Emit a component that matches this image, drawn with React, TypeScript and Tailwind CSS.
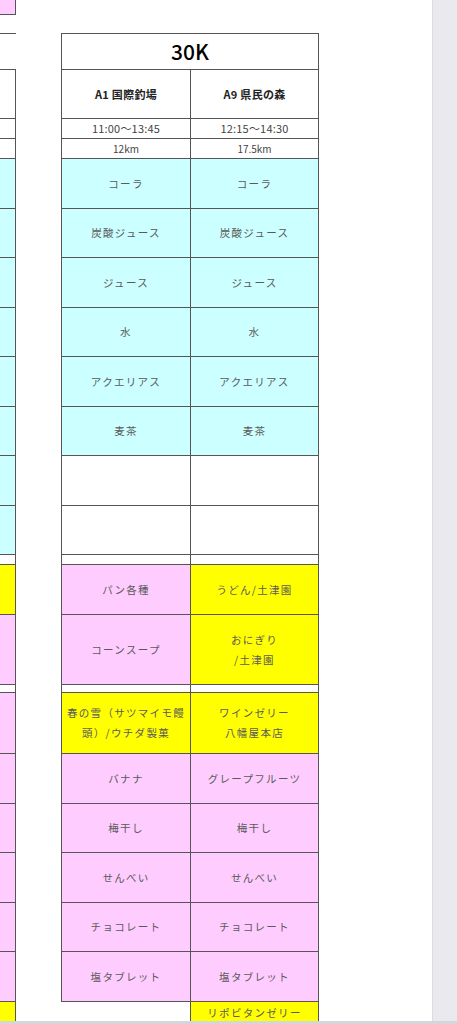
import React from "react";

type Bg = "w" | "c" | "p" | "y";
const bgClass: Record<Bg, string> = {
  w: "bg-white",
  c: "bg-[#ccffff]",
  p: "bg-[#ffccff]",
  y: "bg-[#ffff00]",
};

type Row = { h: string; a?: React.ReactNode; b?: React.ReactNode; ba: Bg; bb: Bg; kind?: "item" | "time" | "km" | "head" };

const rows: Row[] = [
  { h: "h-[49px]", a: "A1 国際釣場", b: "A9 県民の森", ba: "w", bb: "w", kind: "head" },
  { h: "h-[20px]", a: "11:00〜13:45", b: "12:15〜14:30", ba: "w", bb: "w", kind: "time" },
  { h: "h-[20px]", a: "12km", b: "17.5km", ba: "w", bb: "w", kind: "km" },
  { h: "h-[50px]", a: "コーラ", b: "コーラ", ba: "c", bb: "c" },
  { h: "h-[49px]", a: "炭酸ジュース", b: "炭酸ジュース", ba: "c", bb: "c" },
  { h: "h-[50px]", a: "ジュース", b: "ジュース", ba: "c", bb: "c" },
  { h: "h-[49px]", a: "水", b: "水", ba: "c", bb: "c" },
  { h: "h-[50px]", a: "アクエリアス", b: "アクエリアス", ba: "c", bb: "c" },
  { h: "h-[49px]", a: "麦茶", b: "麦茶", ba: "c", bb: "c" },
  { h: "h-[50px]", ba: "w", bb: "w" },
  { h: "h-[49px]", ba: "w", bb: "w" },
  { h: "h-[10px]", ba: "w", bb: "w" },
  { h: "h-[50px]", a: "パン各種", b: "うどん/土津園", ba: "p", bb: "y" },
  { h: "h-[70px]", a: "コーンスープ", b: (<>おにぎり<br />/土津園</>), ba: "p", bb: "y" },
  { h: "h-[8px]", ba: "w", bb: "w" },
  { h: "h-[61px]", a: (<>春の雪（サツマイモ饅<br />頭）/ウチダ製菓</>), b: (<>ワインゼリー<br />八幡屋本店</>), ba: "y", bb: "y" },
  { h: "h-[50px]", a: "バナナ", b: "グレープフルーツ", ba: "p", bb: "p" },
  { h: "h-[49px]", a: "梅干し", b: "梅干し", ba: "p", bb: "p" },
  { h: "h-[50px]", a: "せんべい", b: "せんべい", ba: "p", bb: "p" },
  { h: "h-[49px]", a: "チョコレート", b: "チョコレート", ba: "p", bb: "p" },
  { h: "h-[50px]", a: "塩タブレット", b: "塩タブレット", ba: "p", bb: "p" },
];

const leftBg: Bg[] = ["w", "w", "w", "c", "c", "c", "c", "c", "c", "c", "c", "w", "y", "p", "w", "p", "p", "p", "p", "p", "p"];

function textClass(kind?: Row["kind"]) {
  switch (kind) {
    case "head":
      return "text-[11px] font-bold text-[#222] tracking-[0.3px]";
    case "time":
      return "text-[11px] text-[#444] tracking-[0.2px]";
    case "km":
      return "text-[10px] text-[#444]";
    default:
      return "text-[10.5px] text-[#5a5a5a] tracking-[1.3px] leading-[20px]";
  }
}

export default function App() {
  return (
    <div
      className="w-[457px] h-[1024px] overflow-hidden bg-white flex flex-col"
      style={{ fontFamily: '"Noto Sans CJK JP", "Noto Sans", sans-serif' }}
    >
      <div className="flex h-[1021px] shrink-0 overflow-hidden">
        <div className="flex flex-1 items-start overflow-hidden">
          {/* left partial table */}
          <div className="w-[16px] shrink-0 flex flex-col">
            <div className="h-[15px] shrink-0 bg-[#ffccff] border-b border-r border-[#555]" />
            <div className="h-[18px] shrink-0" />
            <div className="h-[37px] shrink-0 border-t border-b border-[#555]" />
            {rows.map((r, i) => (
              <div key={i} className={`${r.h} shrink-0 ${bgClass[leftBg[i]]} border-b border-r border-[#555]`} />
            ))}
            <div className="h-[50px] shrink-0 bg-[#ffff00] border-r border-[#555]" />
          </div>

          {/* main table */}
          <div className="ml-[45px] mt-[33px] w-[258px] shrink-0 flex flex-col">
            <div className="border-l border-r border-t border-[#555] shrink-0">
              <div className="h-[36px] border-b border-[#555] flex items-center justify-center text-[21px] font-medium text-black">
                30K
              </div>
              {rows.map((r, i) => (
                <div key={i} className={`${r.h} flex border-b border-[#555]`}>
                  <div
                    className={`w-[129px] border-r border-[#555] ${bgClass[r.ba]} flex items-center justify-center text-center ${textClass(r.kind)}`}
                  >
                    {r.a}
                  </div>
                  <div
                    className={`flex-1 ${bgClass[r.bb]} flex items-center justify-center text-center ${textClass(r.kind)}`}
                  >
                    {r.b}
                  </div>
                </div>
              ))}
            </div>
            <div className="flex shrink-0">
              <div className="w-[129px]" />
              <div className="w-[129px] h-[50px] bg-[#ffff00] border-l border-r border-[#555] flex items-start justify-center pt-[1px] text-[10.5px] leading-[20px] text-[#5a5a5a] tracking-[1.3px]">
                リポビタンゼリー
              </div>
            </div>
          </div>
          <div className="flex-1" />
        </div>
        {/* scrollbar */}
        <div className="w-[25px] shrink-0 bg-[#e9e9ee] border-l border-[#dcdce2]" />
      </div>
      <div className="h-[3px] shrink-0 bg-[#d6d6da]" />
    </div>
  );
}
